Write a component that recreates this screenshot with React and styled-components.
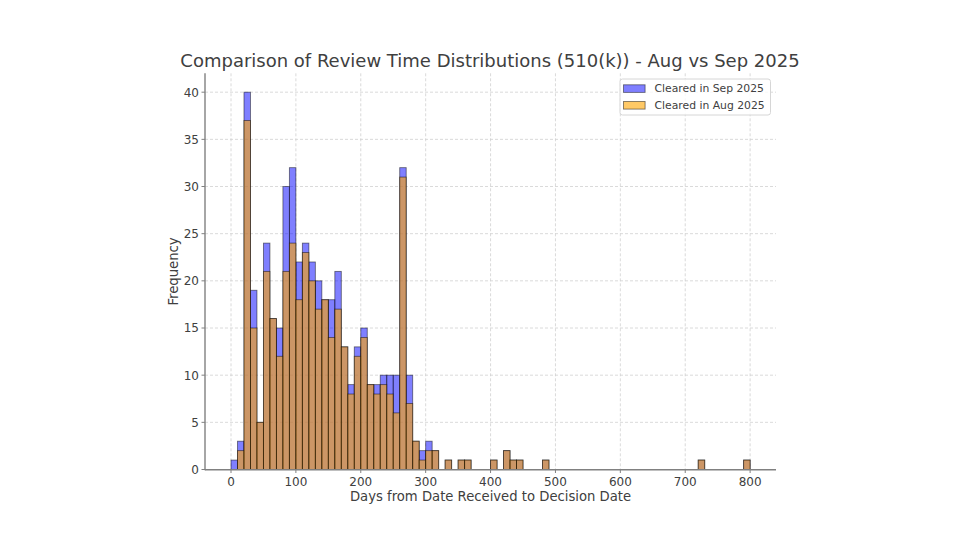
import React from "react";
import styled, { createGlobalStyle } from "styled-components";

const GlobalStyle = createGlobalStyle`
  html, body { margin: 0; padding: 0; background: #ffffff; }
  body { font-family: "DejaVu Sans", "Liberation Sans", sans-serif; }
`;

const Page = styled.div`
  width: 960px;
  height: 540px;
  display: flex;
  background: #ffffff;
  overflow: hidden;
`;

const Chart = styled.svg`
  display: block;
  width: 960px;
  height: 540px;
  font-family: "DejaVu Sans", "Liberation Sans", sans-serif;
`;

const Title = styled.text`
  font-size: 18px;
  fill: #404040;
  text-anchor: middle;
`;

const AxisLabel = styled.text`
  font-size: 13.2px;
  fill: #404040;
  text-anchor: middle;
`;

const TickLabel = styled.text`
  font-size: 12px;
  fill: #404040;
  text-anchor: ${(p) => p.$anchor || "middle"};
`;

const LegendText = styled.text`
  font-size: 10.8px;
  fill: #404040;
`;

const GridLine = styled.line`
  stroke: #d0d0d0;
  stroke-width: 0.8;
  stroke-dasharray: 3 2;
`;

const Spine = styled.line`
  stroke: #808080;
  stroke-width: 1.4;
`;

const Tick = styled.line`
  stroke: #808080;
  stroke-width: 1;
`;

const Bar = styled.rect`
  fill: ${(p) => p.$fill};
  stroke: rgba(0, 0, 0, 0.5);
  stroke-width: 0.9;
`;

const LegendBox = styled.rect`
  fill: rgba(255, 255, 255, 0.8);
  stroke: #d6d6d6;
  stroke-width: 1;
`;

// geometry
const X0 = 231;
const KX = 0.6489;
const Y0 = 469.5;
const KY = 9.433;
const LEFT = 205;
const RIGHT = 776;
const TOP = 73.3;
const BOTTOM = 469.5;

const sep = {
  0: 1, 1: 3, 2: 40, 3: 19, 4: 5, 5: 24, 6: 16, 7: 15, 8: 30, 9: 32, 10: 22,
  11: 24, 12: 22, 13: 20, 14: 18, 15: 18, 16: 21, 17: 13, 18: 9, 19: 13,
  20: 15, 21: 9, 22: 9, 23: 10, 24: 10, 25: 10, 26: 32, 27: 10, 28: 3,
  29: 2, 30: 3, 31: 2, 33: 1, 35: 1, 36: 1, 40: 1, 42: 2, 43: 1, 44: 1,
  48: 1, 72: 1, 79: 1,
};

const aug = {
  1: 2, 2: 37, 3: 15, 4: 5, 5: 21, 6: 16, 7: 12, 8: 21, 9: 24, 10: 18,
  11: 23, 12: 20, 13: 17, 14: 18, 15: 14, 16: 17, 17: 13, 18: 8, 19: 12,
  20: 14, 21: 9, 22: 8, 23: 9, 24: 8, 25: 6, 26: 31, 27: 7, 28: 3, 29: 1,
  30: 2, 31: 2, 33: 1, 35: 1, 36: 1, 40: 1, 42: 2, 43: 1, 44: 1, 48: 1,
  72: 1, 79: 1,
};

const BLUE = "rgba(0, 0, 255, 0.5)";
const ORANGE = "rgba(255, 165, 0, 0.6)";

const xTicks = [0, 100, 200, 300, 400, 500, 600, 700, 800];
const yTicks = [0, 5, 10, 15, 20, 25, 30, 35, 40];

const px = (d) => X0 + d * KX;
const py = (v) => Y0 - v * KY;

function Bars({ data, fill }) {
  return Object.entries(data).map(([bin, v]) => {
    const i = Number(bin);
    return (
      <Bar
        key={bin}
        $fill={fill}
        x={px(i * 10)}
        y={py(v)}
        width={10 * KX}
        height={v * KY}
      />
    );
  });
}

export default function App() {
  return (
    <Page>
      <GlobalStyle />
      <Chart viewBox="0 0 960 540">
        <Title x={490} y={67}>
          Comparison of Review Time Distributions (510(k)) - Aug vs Sep 2025
        </Title>

        {xTicks.map((t) => (
          <GridLine key={"gx" + t} x1={px(t)} x2={px(t)} y1={TOP} y2={BOTTOM} />
        ))}
        {yTicks.map((t) => (
          <GridLine key={"gy" + t} x1={LEFT} x2={RIGHT} y1={py(t)} y2={py(t)} />
        ))}

        <Bars data={sep} fill={BLUE} />
        <Bars data={aug} fill={ORANGE} />

        <Spine x1={LEFT} x2={LEFT} y1={TOP} y2={BOTTOM + 0.7} />
        <Spine x1={LEFT} x2={RIGHT} y1={BOTTOM + 0.3} y2={BOTTOM + 0.3} />

        {yTicks.map((t) => (
          <g key={"ty" + t}>
            <Tick x1={LEFT - 3.5} x2={LEFT} y1={py(t)} y2={py(t)} />
            <TickLabel $anchor="end" x={LEFT - 6} y={py(t) + 4.4}>
              {t}
            </TickLabel>
          </g>
        ))}
        {xTicks.map((t) => (
          <g key={"tx" + t}>
            <Tick x1={px(t)} x2={px(t)} y1={BOTTOM} y2={BOTTOM + 3.5} />
            <TickLabel x={px(t)} y={BOTTOM + 16.5}>
              {t}
            </TickLabel>
          </g>
        ))}

        <AxisLabel x={490.5} y={501}>
          Days from Date Received to Decision Date
        </AxisLabel>
        <AxisLabel transform="translate(178 271.5) rotate(-90)" x={0} y={0}>
          Frequency
        </AxisLabel>

        <g>
          <LegendBox x={620} y={79} width={150.5} height={36} rx={2.5} />
          <Bar $fill={BLUE} x={623.5} y={84.8} width={21.6} height={7.6} />
          <LegendText x={654.5} y={92}>Cleared in Sep 2025</LegendText>
          <Bar $fill={ORANGE} x={623.5} y={101.5} width={21.6} height={7.6} />
          <LegendText x={654.5} y={108.8}>Cleared in Aug 2025</LegendText>
        </g>
      </Chart>
    </Page>
  );
}
